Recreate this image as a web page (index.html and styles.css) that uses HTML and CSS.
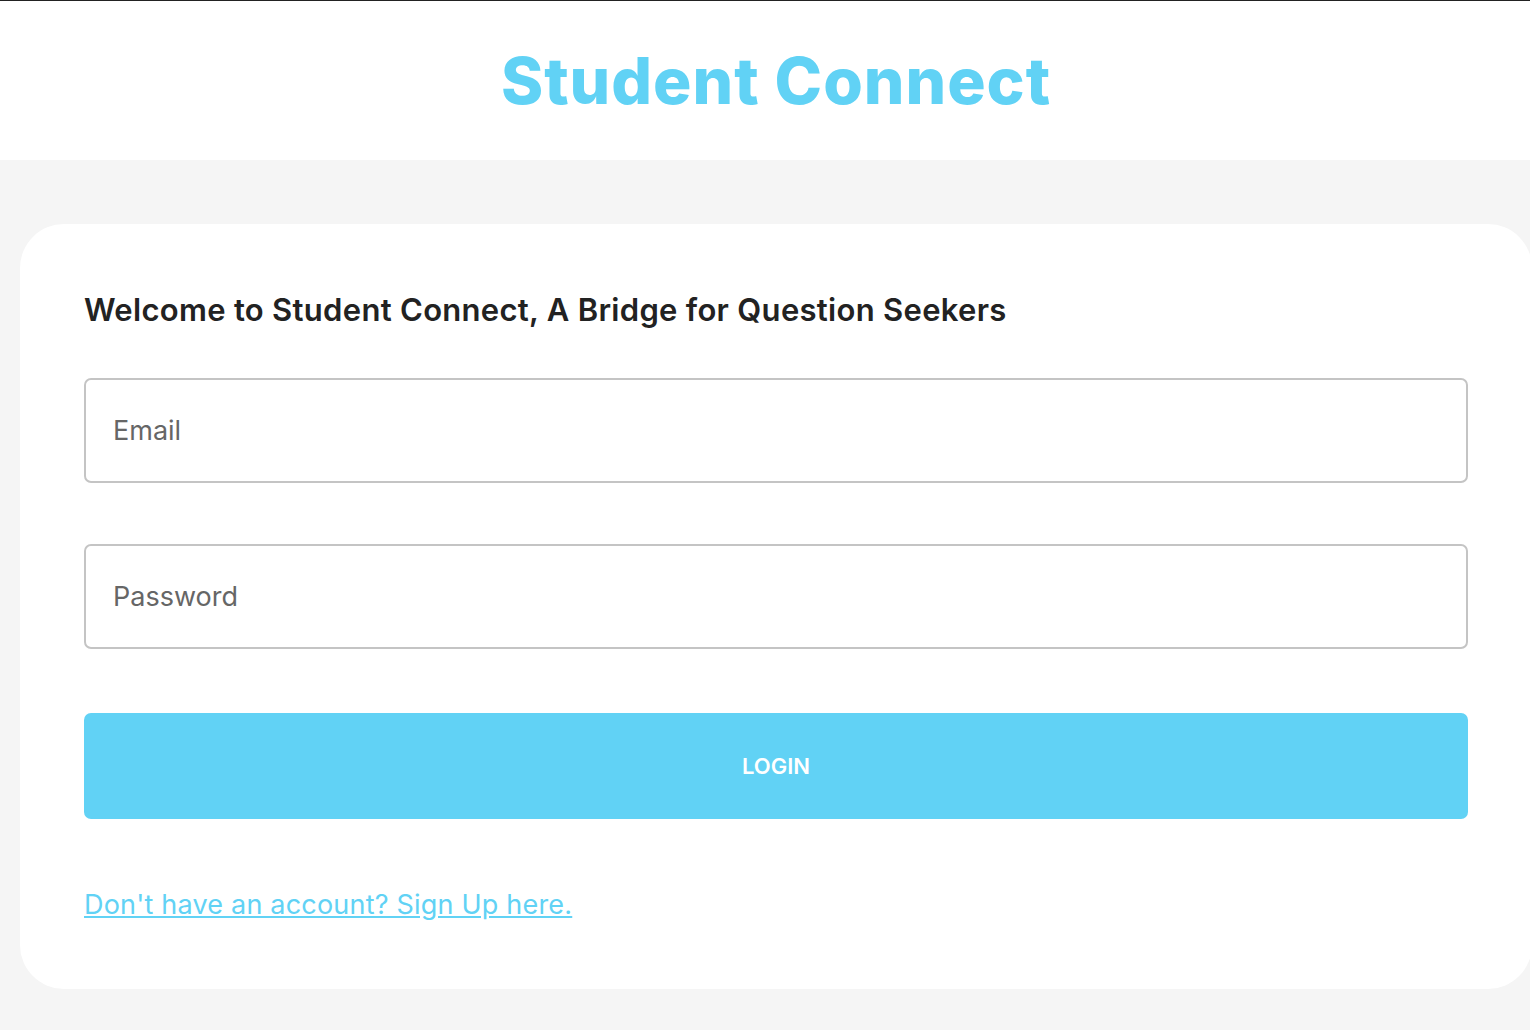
FILE: index.html
```html
<!DOCTYPE html>
<html lang="en">
<head>
    <meta charset="UTF-8">
    <meta name="viewport" content="width=device-width, initial-scale=1.0">
    <title>Student Connect</title>
    <link rel="stylesheet" href="styles.css">
</head>
<body>
    <div class="page">
        <!-- Header -->
        <header class="header">
            <h1 class="logo">Student Connect</h1>
        </header>

        <!-- Login card -->
        <main class="main">
            <div class="card">
                <h2 class="welcome">Welcome to Student Connect, A Bridge for Question Seekers</h2>
                <form class="login-form" onsubmit="return false;">
                    <input class="field" type="email" placeholder="Email">
                    <input class="field" type="password" placeholder="Password">
                    <button class="login-btn" type="submit">LOGIN</button>
                </form>
                <a class="signup-link" href="#">Don't have an account? Sign Up here.</a>
            </div>
        </main>
    </div>
</body>
</html>
```

FILE: styles.css
```css
html, body {
    margin: 0;
    overflow-x: hidden;
}

body {
    font-family: 'Inter', 'Noto Sans', sans-serif;
    background-color: #f5f5f5;
    color: #222;
}

.page {
    width: 1552px;
}

/* Header */
.header {
    background: #fff;
    border-top: 1px solid #222;
    height: 159px;
    display: flex;
    align-items: center;
    justify-content: center;
}

.logo {
    margin: 0;
    font-size: 64px;
    font-weight: 800;
    color: #61d2f5;
    letter-spacing: 1px;
}

/* Card */
.main {
    padding: 64px 20px 40px;
}

.card {
    background: #fff;
    border-radius: 44px;
    padding: 67px 64px 68px;
}

.welcome {
    margin: 0 0 50px;
    font-size: 31px;
    font-weight: 600;
    letter-spacing: 0.3px;
    color: #222;
}

.login-form {
    display: flex;
    flex-direction: column;
    gap: 61px;
}

.field {
    box-sizing: border-box;
    height: 105px;
    width: 100%;
    padding: 0 27px;
    border: 2px solid #c4c4c4;
    border-radius: 7px;
    font-family: inherit;
    font-size: 27px;
    color: #333;
    outline: none;
}

.field::placeholder {
    color: #666;
}

.login-btn {
    margin-top: 3px;
    height: 106px;
    background: #61d2f5;
    color: #fff;
    border: none;
    border-radius: 7px;
    font-family: inherit;
    font-size: 22px;
    font-weight: 600;
    cursor: pointer;
}

.signup-link {
    display: inline-block;
    margin-top: 69px;
    font-size: 27px;
    letter-spacing: 0.2px;
    color: #61d2f5;
}
```
